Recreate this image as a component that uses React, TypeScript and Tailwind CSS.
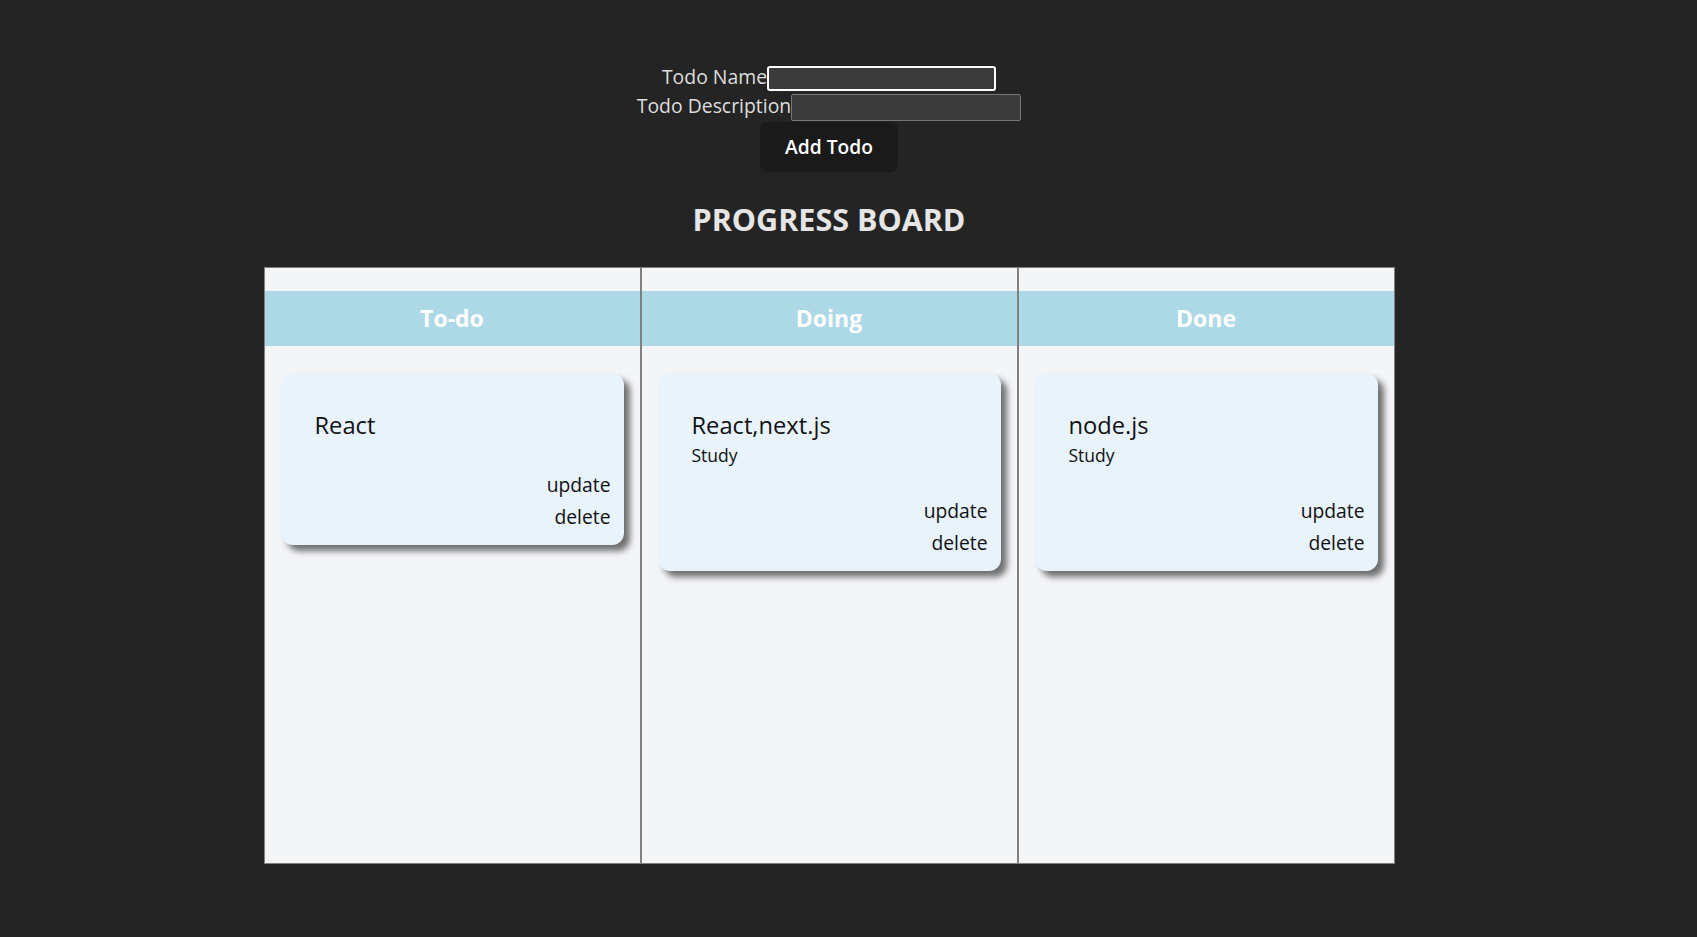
import React, { useState } from 'react';

interface Todo {
  id: number;
  title: string;
  description?: string;
}

const COLUMNS: { name: string; todos: Todo[] }[] = [
  { name: 'To-do', todos: [{ id: 1, title: 'React' }] },
  { name: 'Doing', todos: [{ id: 2, title: 'React,next.js', description: 'Study' }] },
  { name: 'Done', todos: [{ id: 3, title: 'node.js', description: 'Study' }] },
];

function TodoCard({ todo }: { todo: Todo }) {
  return (
    <div className="rounded-[12px] bg-[#e9f3fc] pt-[34px] pb-[12px] text-[#111] shadow-[6px_6px_6px_rgba(0,0,0,0.55)]">
      <div className="pl-[34px] text-[23.7px] leading-[36px]">{todo.title}</div>
      {todo.description && (
        <div className="pl-[34px] text-[17.5px] leading-[25.5px]">{todo.description}</div>
      )}
      <div className="mt-[26px] flex flex-col items-end pr-[13px] text-[19.3px] leading-[32px]">
        <button className="cursor-pointer">update</button>
        <button className="cursor-pointer">delete</button>
      </div>
    </div>
  );
}

export default function App() {
  const [name, setName] = useState('');
  const [desc, setDesc] = useState('');

  return (
    <div className="min-h-screen bg-[#242424] font-['Open_Sans',sans-serif] text-[#dedede]">
      <div className="flex w-[1658px] flex-col items-center pt-[64px]">
        <div className="flex h-[29px] items-center">
          <span className="mb-[4px] text-[19.4px]">Todo Name</span>
          <input
            autoFocus
            value={name}
            onChange={(e) => setName(e.target.value)}
            className="h-[25px] w-[229px] rounded-[3px] border-2 border-white bg-[#3b3b3b] px-1 text-white caret-white outline-none"
          />
        </div>
        <div className="flex h-[29px] items-center">
          <span className="mb-[3px] text-[19.4px]">Todo Description</span>
          <input
            value={desc}
            onChange={(e) => setDesc(e.target.value)}
            className="h-[27px] w-[230px] rounded-[2px] border border-[#767676] bg-[#3b3b3b] px-1 text-white outline-none"
          />
        </div>
        <button className="h-[50px] w-[138px] rounded-[8px] bg-[#1a1a1a] text-[19.2px] font-semibold text-white">
          Add Todo
        </button>

        <h1 className="mt-[25px] text-[30.5px] leading-[45px] font-bold text-[#e6e6e6]">PROGRESS BOARD</h1>

        <div className="mt-[25px] flex">
          {COLUMNS.map((col) => (
            <div key={col.name} className="h-[597px] w-[377px] border border-[#808080] bg-[#f4f5f7]">
              <div className="mt-[23px] flex h-[55px] items-center justify-center bg-[#add8e6] text-[23px] font-bold text-white">
                {col.name}
              </div>
              <div className="mt-[27px] flex flex-col gap-4 px-4">
                {col.todos.map((t) => (
                  <TodoCard key={t.id} todo={t} />
                ))}
              </div>
            </div>
          ))}
        </div>
      </div>
    </div>
  );
}
